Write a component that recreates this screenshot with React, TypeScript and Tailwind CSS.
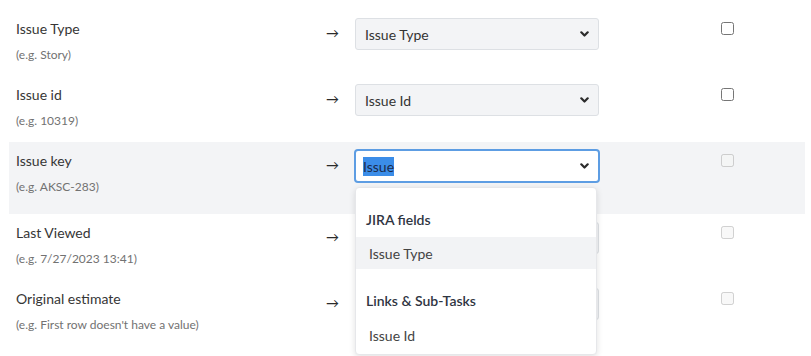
import React from 'react';

interface FieldRow {
  label: string;
  hint: string;
  value: string;
}

const rows: FieldRow[] = [
  { label: 'Issue Type', hint: '(e.g. Story)', value: 'Issue Type' },
  { label: 'Issue id', hint: '(e.g. 10319)', value: 'Issue Id' },
  { label: 'Issue key', hint: '(e.g. AKSC-283)', value: 'Issue' },
  { label: 'Last Viewed', hint: '(e.g. 7/27/2023 13:41)', value: 'Last Viewed' },
  { label: 'Original estimate', hint: "(e.g. First row doesn't have a value)", value: 'Original estimate' },
];

const ACTIVE = 2;

function Chevron() {
  return (
    <svg width="9" height="6" viewBox="0 0 9 6" className="text-[#2b2b2b]">
      <polyline points="1.3,1.3 4.5,4.5 7.7,1.3" fill="none" stroke="currentColor" strokeWidth="2.2" strokeLinecap="round" strokeLinejoin="round" />
    </svg>
  );
}

function Menu() {
  return (
    <div className="absolute left-0 top-[38px] z-10 w-[242px] rounded-[4px] border border-[#e6e7ea] bg-white pt-[17px] pb-[3px] shadow-[0_2px_6px_rgba(0,0,0,0.12)]">
      <div className="flex h-[28px] items-center px-[10px] text-[14px] font-semibold text-[#2f3542]">JIRA fields</div>
      <div className="mt-[4px] flex h-[32px] items-center bg-[#f2f3f5] px-[13px] text-[14px] text-[#444]">Issue Type</div>
      <div className="mt-[17px] flex h-[28px] items-center px-[10px] text-[14px] font-semibold text-[#2f3542]">Links &amp; Sub-Tasks</div>
      <div className="mt-[5px] flex h-[32px] items-center px-[13px] text-[14px] text-[#444]">Issue Id</div>
    </div>
  );
}

function SelectBox({ value, active, covered }: { value: string; active: boolean; covered: boolean }) {
  if (active) {
    return (
      <div className="relative">
        <div className="-mx-[1px] -my-[1px] flex h-[34px] items-center justify-between rounded-[4px] border-2 border-[#5d9de3] bg-white pl-[7px] pr-[9px]">
          <span className="bg-[#3b8de8] text-[14px] leading-[19px] text-[#1c2b4d]">{value}</span>
          <Chevron />
        </div>
        <Menu />
      </div>
    );
  }
  return (
    <div className="flex h-[32px] items-center justify-between rounded-[3px] border border-[#dde0e4] bg-[#f3f4f6] pl-[9px] pr-[9px] text-[14px] text-[#333]">
      <span className={covered ? 'invisible' : ''}>{value}</span>
      <Chevron />
    </div>
  );
}

export default function App() {
  return (
    <div className="h-[356px] w-[811px] overflow-hidden bg-white pl-[9px] pr-[6px] pt-[10px] font-['Lato','Noto_Sans',sans-serif]">
      {rows.map((r, i) => (
        <div
          key={r.label}
          className={`flex items-start pl-[7px] pt-[8px] ${i === ACTIVE ? 'h-[72px] bg-[#f3f4f6]' : 'h-[66px]'}`}
        >
          <div className="w-[310px] pt-[1px]">
            <div className="text-[14px] leading-[20px] text-[#363636]">{r.label}</div>
            <div className="mt-[8px] text-[12px] leading-[16px] text-[#727272]">{r.hint}</div>
          </div>
          <div className="flex h-[32px] w-[29px] items-center text-[13px] text-[#2a2a2a]">→</div>
          <div className="w-[244px]">
            <SelectBox value={r.value} active={i === ACTIVE} covered={i > ACTIVE} />
          </div>
          <div className="ml-[122px] pt-[4px]">
            <input type="checkbox" disabled={i >= ACTIVE} className="m-0 block h-[13px] w-[13px]" readOnly />
          </div>
        </div>
      ))}
    </div>
  );
}
